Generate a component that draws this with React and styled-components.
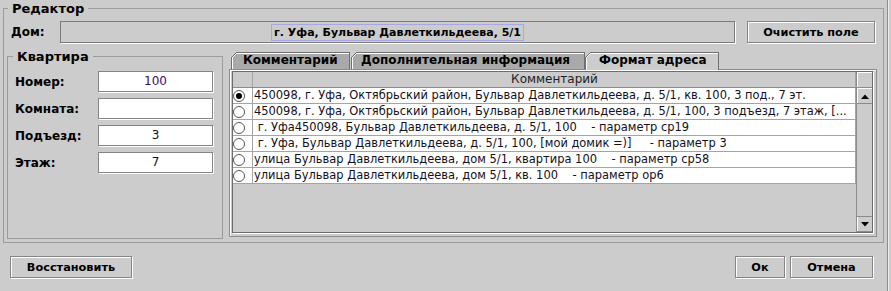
import React from 'react';
import styled, { createGlobalStyle } from 'styled-components';

const GlobalStyle = createGlobalStyle`
  html, body { margin: 0; padding: 0; background: #cccccc; }
  body { font-family: 'DejaVu Sans', 'Liberation Sans', sans-serif; color: #000; }
  * { box-sizing: border-box; }
`;

const Window = styled.div`
  width: 888px;
  height: 291px;
  padding-left: 3px;
  border-right: 1px solid #8c8c8c;
  box-shadow: 1px 0 0 #eeeeee;
  display: flex;
  flex-direction: column;
`;

const Group = styled.fieldset`
  margin: 0;
  min-width: 0;
  border: 1px solid #9c9c9c;
  padding: ${p => p.$pad};
  width: ${p => p.$width}px;
`;

const Legend = styled.legend`
  padding: 0 4px;
  margin-left: ${p => p.$shift}px;
  font-size: 13px;
  font-weight: bold;
  line-height: 17px;
`;

const HouseRow = styled.div`
  display: flex;
  align-items: center;
  height: 22px;
  padding-left: 4px;
`;

const Label = styled.div`
  width: ${p => p.$width}px;
  flex-shrink: 0;
  font-size: 12px;
  font-weight: bold;
  white-space: nowrap;
`;

const HouseField = styled.div`
  width: 675px;
  height: 22px;
  border: 1px solid #7c7c7c;
  box-shadow: 1px 1px 0 #ffffff;
  display: flex;
  align-items: center;
  justify-content: center;
`;

const HouseText = styled.span`
  height: 17px;
  line-height: 15px;
  padding: 0 2px;
  border: 1px solid #a8a8dc;
  font-size: 11px;
  font-weight: bold;
  white-space: nowrap;
`;

const Button = styled.button`
  width: ${p => p.$width}px;
  height: 22px;
  margin: 0 0 0 ${p => p.$gap || 0}px;
  padding: 0;
  background: #cccccc;
  border: 1px solid #858585;
  box-shadow: inset 1px 1px 0 #ffffff, 1px 1px 0 #ffffff;
  font-family: 'DejaVu Sans', sans-serif;
  font-size: 11.3px;
  font-weight: bold;
  color: #000;
`;

const Body = styled.div`
  display: flex;
  height: 191px;
  margin-top: 5px;
`;

const FlatFields = styled.div`
  display: flex;
  flex-direction: column;
  gap: 6px;
  padding-top: 3px;
`;

const FieldRow = styled.div`
  display: flex;
  align-items: center;
`;

const TextField = styled.div`
  width: 115px;
  height: 21px;
  background: #ffffff;
  border: 1px solid #858585;
  box-shadow: 1px 1px 0 #ffffff;
  font-size: 12px;
  line-height: 19px;
  text-align: center;
  color: ${p => p.$color || '#111'};
`;

const TabsArea = styled.div`
  width: 648px;
  margin-left: 6px;
  padding: 4px 0 2px;
  display: flex;
  flex-direction: column;
`;

const TabStrip = styled.div`
  display: flex;
  height: 17px;
  padding-left: 2px;
`;

const dark = '#707070';

const Tab = styled.div`
  position: relative;
  z-index: ${p => (p.$active ? 1 : 0)};
  height: ${p => (p.$active ? 18 : 17)}px;
  width: ${p => p.$width}px;
  margin-left: ${p => p.$gap || 0}px;
  padding-left: ${p => p.$indent}px;
  font-size: 12px;
  font-weight: bold;
  line-height: 17px;
  white-space: nowrap;
  border-right: 1px solid ${dark};
  background:
    linear-gradient(${dark}, ${dark}) 6px 0 / calc(100% - 6px) 1px no-repeat,
    linear-gradient(#fff, #fff) 6px 1px / calc(100% - 6px) 1px no-repeat,
    linear-gradient(${dark}, ${dark}) 0 6px / 1px 100% no-repeat,
    linear-gradient(#fff, #fff) 1px 6px / 1px 100% no-repeat,
    linear-gradient(135deg, transparent 3.6px, ${dark} 3.6px, ${dark} 4.6px, #fff 4.6px, #fff 5.6px,
      ${p => (p.$active ? '#cccccc' : '#a9a9a9')} 5.6px);
`;

const Panel = styled.div`
  flex: 1;
  border: 1px solid #8c8c8c;
  box-shadow: inset 1px 1px 0 #ffffff;
  padding: 1px 3px 3px 2px;
  display: flex;
`;

const ScrollPane = styled.div`
  flex: 1;
  display: flex;
  border: 1px solid #6c6c6c;
  box-shadow: 1px 1px 0 #ffffff;
`;

const Table = styled.div`
  width: 623px;
  display: flex;
  flex-direction: column;
`;

const Row = styled.div`
  display: flex;
  height: 16px;
  background: ${p => (p.$header ? '#cccccc' : '#ffffff')};
  border-bottom: 1px solid ${p => (p.$header ? '#8c8c8c' : '#a4a4a4')};
  border-right: 1px solid #a4a4a4;
`;

const RadioCell = styled.div`
  width: 20px;
  flex-shrink: 0;
  border-right: 1px solid #a4a4a4;
  display: flex;
  align-items: center;
`;

const TextCell = styled.div`
  flex: 1;
  overflow: hidden;
  padding-left: 1px;
  font-size: ${p => (p.$header ? 12 : 11.45)}px;
  line-height: 15px;
  white-space: pre;
  color: ${p => (p.$header ? '#222' : '#14101c')};
  text-align: ${p => (p.$header ? 'center' : 'left')};
`;

const ScrollBar = styled.div`
  width: 16px;
  border-left: 1px solid #8c8c8c;
  display: flex;
  flex-direction: column;
`;

const Corner = styled.div`
  height: 16px;
  border-bottom: 1px solid #8c8c8c;
  box-shadow: inset 1px 1px 0 #ffffff;
`;

const Track = styled.div`
  flex: 1;
`;

const ArrowButton = styled.div`
  height: 16px;
  border-top: 1px solid ${p => (p.$down ? '#8c8c8c' : '#ffffff')};
  border-bottom: 1px solid #8c8c8c;
  box-shadow: inset 1px 0 0 #ffffff;
  display: flex;
  align-items: center;
  justify-content: center;
`;

const Footer = styled.div`
  display: flex;
  margin-top: 13px;
  padding: 0 14px 0 7px;
`;

const Spacer = styled.div`
  flex: 1;
`;

const Radio = ({ checked }) => (
  <svg width="12" height="12" viewBox="0 0 12 12">
    <circle cx="6" cy="6" r="5.5" fill="#fff" stroke="#555" />
    {checked && <circle cx="6" cy="6" r="3" fill="#000" />}
  </svg>
);

const Arrow = ({ down }) => (
  <svg width="8" height="5" viewBox="0 0 8 5">
    <polygon points={down ? '0,0 8,0 4,4.5' : '4,0.5 8,5 0,5'} fill="#000" />
  </svg>
);

const rows = [
  '450098, г. Уфа, Октябрьский район, Бульвар Давлеткильдеева, д. 5/1, кв. 100, 3 под., 7 эт.',
  '450098, г. Уфа, Октябрьский район, Бульвар Давлеткильдеева, д. 5/1, 100, 3 подъезд, 7 этаж, [...',
  ' г. Уфа450098, Бульвар Давлеткильдеева, д. 5/1, 100    - параметр ср19',
  ' г. Уфа, Бульвар Давлеткильдеева, д. 5/1, 100, [мой домик =)]     - параметр 3',
  'улица Бульвар Давлеткильдеева, дом 5/1, квартира 100    - параметр ср58',
  'улица Бульвар Давлеткильдеева, дом 5/1, кв. 100    - параметр ор6',
];

const flat = [
  { label: 'Номер:', value: '100', color: '#3e0a62' },
  { label: 'Комната:', value: '' },
  { label: 'Подъезд:', value: '3' },
  { label: 'Этаж:', value: '7' },
];

export default function App() {
  return (
    <Window>
      <GlobalStyle />
      <Group $pad="4px 6px 3px 3px" $width={881}>
        <Legend $shift={1}>Редактор</Legend>
        <HouseRow>
          <Label $width={49}>Дом:</Label>
          <HouseField>
            <HouseText>г. Уфа, Бульвар Давлеткильдеева, 5/1</HouseText>
          </HouseField>
          <Button $width={128} $gap={12}>Очистить поле</Button>
        </HouseRow>
        <Body>
          <Group $pad="3px 8px 0 7px" $width={216}>
            <Legend $shift={-2}>Квартира</Legend>
            <FlatFields>
              {flat.map(f => (
                <FieldRow key={f.label}>
                  <Label $width={83}>{f.label}</Label>
                  <TextField $color={f.color}>{f.value}</TextField>
                </FieldRow>
              ))}
            </FlatFields>
          </Group>
          <TabsArea>
            <TabStrip>
              <Tab $width={119} $indent={12}>Комментарий</Tab>
              <Tab $width={234} $indent={10} $gap={1}>Дополнительная информация</Tab>
              <Tab $width={134} $indent={14} $active>Формат адреса</Tab>
            </TabStrip>
            <Panel>
              <ScrollPane>
                <Table>
                  <Row $header>
                    <RadioCell />
                    <TextCell $header>Комментарий</TextCell>
                  </Row>
                  {rows.map((text, i) => (
                    <Row key={i}>
                      <RadioCell><Radio checked={i === 0} /></RadioCell>
                      <TextCell>{text}</TextCell>
                    </Row>
                  ))}
                </Table>
                <ScrollBar>
                  <Corner />
                  <ArrowButton><Arrow /></ArrowButton>
                  <Track />
                  <ArrowButton $down><Arrow down /></ArrowButton>
                </ScrollBar>
              </ScrollPane>
            </Panel>
          </TabsArea>
        </Body>
      </Group>
      <Footer>
        <Button $width={122}>Восстановить</Button>
        <Spacer />
        <Button $width={50}>Ок</Button>
        <Button $width={83} $gap={5}>Отмена</Button>
      </Footer>
    </Window>
  );
}
